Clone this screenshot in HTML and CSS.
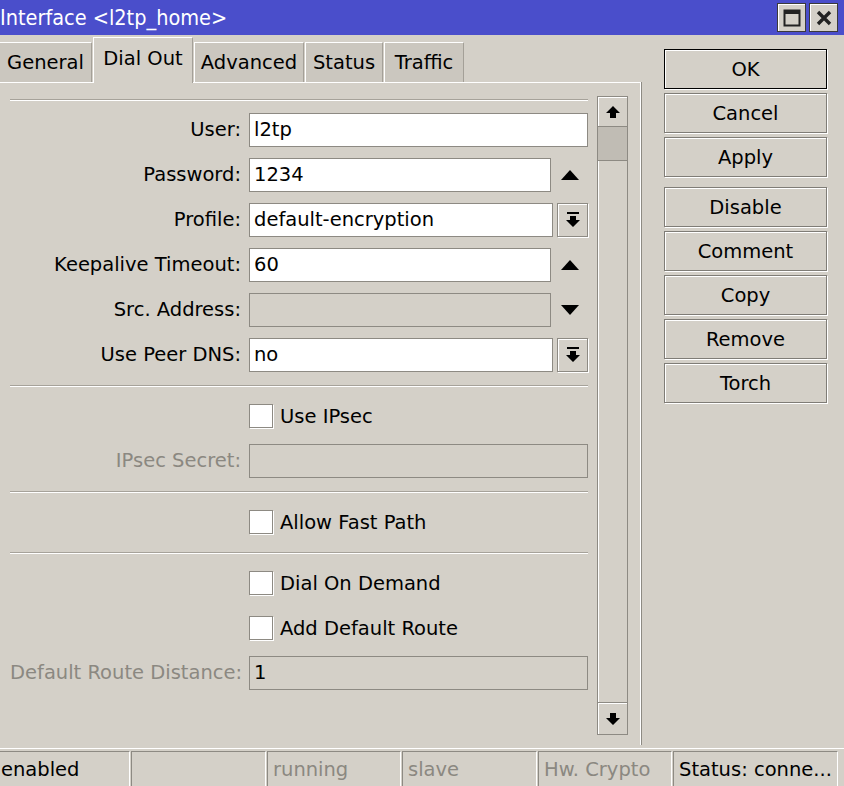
FILE: index.html
```html
<!DOCTYPE html>
<html lang="en">
<head>
    <meta charset="UTF-8">
    <title>Interface &lt;l2tp_home&gt;</title>
    <link rel="stylesheet" href="styles.css">
</head>
<body>
    <div class="window">
        <div class="titlebar">
            <span class="title">Interface &lt;l2tp_home&gt;</span>
            <div class="wincontrols">
                <span class="winbtn">
                    <svg width="18" height="18" viewBox="0 0 18 18"><rect x="1.5" y="1.5" width="15" height="15" fill="none" stroke="#222" stroke-width="2"/><rect x="1" y="1" width="16" height="4" fill="#222"/></svg>
                </span>
                <span class="winbtn">
                    <svg width="16" height="16" viewBox="0 0 16 16"><path d="M2 2 L14 14 M14 2 L2 14" stroke="#222" stroke-width="3.4"/></svg>
                </span>
            </div>
        </div>

        <div class="main">
            <div class="left">
                <div class="tabs">
                    <div class="tab" style="width: 92px">General</div>
                    <div class="tab active" style="width: 100px">Dial Out</div>
                    <div class="tab" style="width: 110px">Advanced</div>
                    <div class="tab" style="width: 78px">Status</div>
                    <div class="tab" style="width: 80px">Traffic</div>
                </div>

                <div class="panel">
                    <div class="form">
                        <div class="sep first"></div>

                        <div class="row">
                            <label>User:</label>
                            <div class="field"><div class="input">l2tp</div></div>
                        </div>
                        <div class="row">
                            <label>Password:</label>
                            <div class="field">
                                <div class="input narrow">1234</div>
                                <span class="spin"><svg width="18" height="10" viewBox="0 0 18 10"><path d="M0 10 L9 0 L18 10 Z" fill="#000"/></svg></span>
                            </div>
                        </div>
                        <div class="row">
                            <label>Profile:</label>
                            <div class="field">
                                <div class="input combo">default-encryption</div>
                                <span class="dropbtn"><svg width="14" height="16" viewBox="0 0 14 16"><rect x="1" y="0" width="12" height="2" fill="#000"/><path d="M4 4 H10 V8 H14 L7 15 L0 8 H4 Z" fill="#000"/></svg></span>
                            </div>
                        </div>
                        <div class="row">
                            <label>Keepalive Timeout:</label>
                            <div class="field">
                                <div class="input narrow">60</div>
                                <span class="spin"><svg width="18" height="10" viewBox="0 0 18 10"><path d="M0 10 L9 0 L18 10 Z" fill="#000"/></svg></span>
                            </div>
                        </div>
                        <div class="row">
                            <label>Src. Address:</label>
                            <div class="field">
                                <div class="input narrow off"></div>
                                <span class="spin"><svg width="18" height="10" viewBox="0 0 18 10"><path d="M0 0 L18 0 L9 10 Z" fill="#000"/></svg></span>
                            </div>
                        </div>
                        <div class="row">
                            <label>Use Peer DNS:</label>
                            <div class="field">
                                <div class="input combo">no</div>
                                <span class="dropbtn"><svg width="14" height="16" viewBox="0 0 14 16"><rect x="1" y="0" width="12" height="2" fill="#000"/><path d="M4 4 H10 V8 H14 L7 15 L0 8 H4 Z" fill="#000"/></svg></span>
                            </div>
                        </div>

                        <div class="sep"></div>

                        <div class="row">
                            <label></label>
                            <div class="field check"><span class="box"></span>Use IPsec</div>
                        </div>
                        <div class="row">
                            <label class="dim">IPsec Secret:</label>
                            <div class="field"><div class="input off"></div></div>
                        </div>

                        <div class="sep"></div>

                        <div class="row">
                            <label></label>
                            <div class="field check"><span class="box"></span>Allow Fast Path</div>
                        </div>

                        <div class="sep"></div>

                        <div class="row">
                            <label></label>
                            <div class="field check"><span class="box"></span>Dial On Demand</div>
                        </div>
                        <div class="row">
                            <label></label>
                            <div class="field check"><span class="box"></span>Add Default Route</div>
                        </div>
                        <div class="row">
                            <label class="dim">Default Route Distance:</label>
                            <div class="field"><div class="input off">1</div></div>
                        </div>
                    </div>

                    <div class="scrollbar">
                        <span class="sbtn up"><svg width="14" height="12" viewBox="0 0 14 12"><path d="M0 7 L7 0 L14 7 H10 V12 H4 V7 Z" fill="#000"/></svg></span>
                        <span class="thumb"></span>
                        <span class="track"></span>
                        <span class="sbtn down"><svg width="14" height="12" viewBox="0 0 14 12"><path d="M4 0 H10 V5 H14 L7 12 L0 5 H4 Z" fill="#000"/></svg></span>
                    </div>
                </div>
            </div>

            <div class="actions">
                <button class="default">OK</button>
                <button>Cancel</button>
                <button>Apply</button>
                <button class="group">Disable</button>
                <button>Comment</button>
                <button>Copy</button>
                <button>Remove</button>
                <button>Torch</button>
            </div>
        </div>

        <div class="statusbar">
            <span class="cell" style="width: 130px">enabled</span>
            <span class="cell" style="width: 135px"></span>
            <span class="cell dim" style="width: 134px">running</span>
            <span class="cell dim" style="width: 135px">slave</span>
            <span class="cell dim" style="width: 134px">Hw. Crypto</span>
            <span class="cell" style="width: 165px">Status: conne...</span>
        </div>
    </div>
</body>
</html>
```

FILE: styles.css
```css
body {
    margin: 0;
    background-color: #d4d0c8;
    font-family: "DejaVu Sans", sans-serif;
    font-size: 19.5px;
    color: #000;
}
.window {
    width: 844px;
    height: 786px;
    display: flex;
    flex-direction: column;
    overflow: hidden;
}

/* title bar */
.titlebar {
    height: 35px;
    flex: none;
    background-color: #4a4ecb;
    display: flex;
    align-items: center;
    justify-content: space-between;
}
.title {
    color: #fff;
    font-family: "DejaVu Sans Condensed", "DejaVu Sans", sans-serif;
    font-size: 21.5px;
}
.wincontrols {
    display: flex;
    gap: 3px;
    margin-right: 6px;
}
.winbtn {
    width: 27px;
    height: 27px;
    background-color: #d4d0c8;
    border: 1px solid #3a3a3a;
    box-shadow: inset 1px 1px #fff;
    display: flex;
    align-items: center;
    justify-content: center;
}

/* middle part */
.main {
    flex: 1;
    display: flex;
    min-height: 0;
}
.left {
    width: 641px;
    display: flex;
    flex-direction: column;
}
.tabs {
    height: 47px;
    display: flex;
    align-items: flex-end;
    position: relative;
    z-index: 1;
}
.tab {
    height: 40px;
    line-height: 40px;
    text-align: center;
    background-color: #cbc7bf;
    border-top: 1px solid #fff;
    border-left: 1px solid #fff;
    border-right: 1px solid #a4a098;
    box-sizing: border-box;
    margin-right: 1px;
}
.tab:first-child { border-left: none; }
.tab.active {
    height: 46px;
    line-height: 42px;
    background-color: #d4d0c8;
    margin-bottom: -1px;
}
.panel {
    height: 663px;
    border-top: 1px solid #fff;
    border-right: 1px solid #fff;
    box-shadow: 1px 0 #8d8a83;
    display: flex;
    padding: 13px 12px 0 10px;
    box-sizing: border-box;
    gap: 9px;
}

/* form */
.form {
    width: 578px;
    display: flex;
    flex-direction: column;
}
.sep {
    border-top: 1px solid #a6a29a;
    border-bottom: 1px solid #fff;
    margin: 2px 0 12px;
}
.sep.first { margin-top: 3px; }
.row {
    display: grid;
    grid-template-columns: 231px 339px;
    column-gap: 8px;
    height: 34px;
    margin-bottom: 11px;
}
.row label {
    text-align: right;
    line-height: 34px;
    white-space: nowrap;
}
.dim { color: #8b8881; }
.field {
    display: flex;
    align-items: center;
}
.input {
    flex: 1;
    height: 34px;
    line-height: 32px;
    box-sizing: border-box;
    background-color: #fff;
    border: 1px solid #8d8a83;
    padding-left: 4px;
    white-space: nowrap;
}
.input.narrow { flex: none; width: 302px; }
.input.combo { flex: none; width: 304px; }
.input.off { background-color: #d4d0c8; }
.spin {
    flex: 1;
    display: flex;
    justify-content: center;
    align-items: center;
}
.dropbtn {
    width: 31px;
    height: 34px;
    box-sizing: border-box;
    margin-left: 4px;
    border: 1px solid #8d8a83;
    box-shadow: inset 1px 1px #fff, 1px 1px #fff;
    display: flex;
    justify-content: center;
    align-items: center;
}
.check { gap: 7px; }
.box {
    width: 24px;
    height: 24px;
    box-sizing: border-box;
    background-color: #fff;
    border: 1px solid #8d8a83;
    box-shadow: 1px 1px #fff;
}

/* scroll bar */
.scrollbar {
    width: 31px;
    height: 639px;
    box-sizing: border-box;
    border: 1px solid #8d8a83;
    display: flex;
    flex-direction: column;
}
.sbtn {
    height: 29px;
    flex: none;
    box-shadow: inset 1px 1px #fff;
    display: flex;
    justify-content: center;
    align-items: center;
}
.sbtn.up { border-bottom: 1px solid #8d8a83; }
.sbtn.down { height: 31px; border-top: 1px solid #8d8a83; }
.thumb {
    height: 33px;
    flex: none;
    background-color: #c0bcb4;
    border-bottom: 1px solid #8d8a83;
}
.track {
    flex: 1;
    box-shadow: inset 1px 0 #fff;
}

/* buttons on the right */
.actions {
    padding: 14px 0 0 23px;
    display: flex;
    flex-direction: column;
    gap: 4px;
}
button {
    width: 163px;
    height: 40px;
    background-color: #d4d0c8;
    border: 1px solid #7f7c76;
    box-shadow: inset 1px 1px #fff, 1px 1px #fff;
    font-family: inherit;
    font-size: 19.5px;
    color: #000;
    padding: 0;
}
button.default { border-color: #000; }
button.group { margin-top: 6px; }

/* status bar */
.statusbar {
    height: 38px;
    flex: none;
    display: flex;
    gap: 1px;
    padding-top: 2px;
    box-sizing: border-box;
    border-top: 1px solid #fff;
}
.cell {
    height: 36px;
    line-height: 36px;
    box-sizing: border-box;
    border-left: 1px solid #8d8a83;
    border-top: 1px solid #8d8a83;
    border-right: 1px solid #fff;
    padding-left: 5px;
    white-space: nowrap;
    overflow: hidden;
}
.cell:first-child { padding-left: 1px; border-left: none; }
```
